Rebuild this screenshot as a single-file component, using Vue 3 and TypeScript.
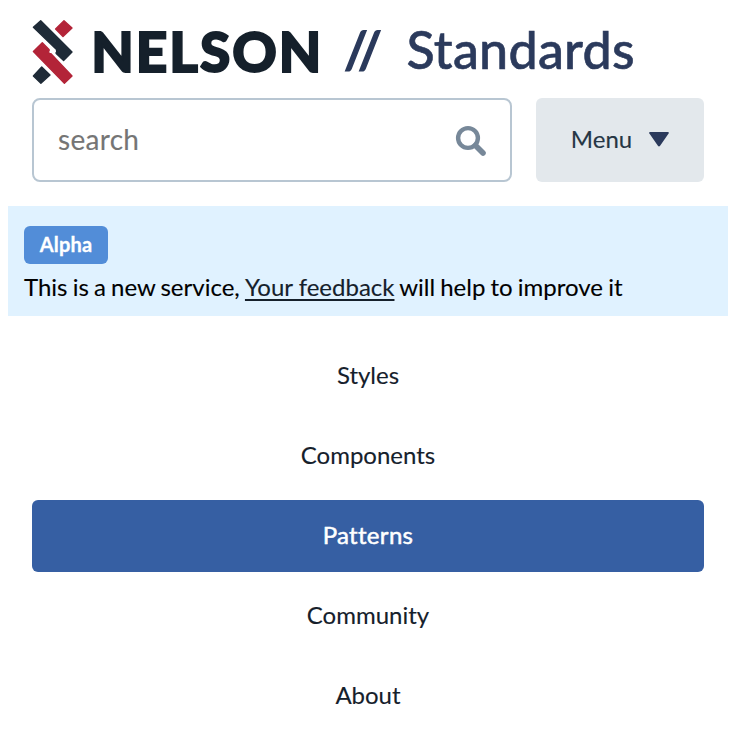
<script setup lang="ts">
import { ref } from 'vue'

const query = ref<string>('')
const active = ref<string>('Patterns')
const sections: string[] = ['Styles', 'Components', 'Patterns', 'Community', 'About']
</script>

<template>
  <div class="page">
    <header class="header">
      <a class="brand" aria-label="NELSON // Standards">
        <svg width="640" height="74" viewBox="0 0 640 74">
          <g stroke-width="1.4" stroke-linejoin="round">
            <path class="dark" d="M8.7 4.8 L40 36 L31.6 44.4 L24.2 37.4 Q23.7 36.6 24.7 36 L24.5 33.4 L1.4 11.3 Z" />
            <path class="red" d="M32 4.8 L40 12 L31 20.5 L23.6 12.9 Z" />
            <path class="red" d="M10.3 26.7 L17 33.5 Q17.6 34.2 16.6 35 L17 37.4 L19 37.8 L40 59.9 L32.4 67.2 L1.4 35.5 Z" />
            <path class="dark" d="M9.7 51.1 L18 58.9 L8.9 67.2 L1.4 60 Z" />
          </g>
          <text class="name" x="59.3" y="55.6" textLength="230">NELSON</text>
          <text class="product slashes" x="312.5" y="52">//</text>
          <text class="product" x="374.5" y="53" textLength="228">Standards</text>
        </svg>
      </a>
      <div class="tools">
        <label class="search">
          <input v-model="query" type="text" placeholder="search" />
          <svg width="32" height="32" viewBox="0 0 32 32">
            <circle cx="13" cy="13" r="9.9" />
            <path d="M20.5 20.5 L28 28" />
          </svg>
        </label>
        <button class="menu" type="button">
          <span>Menu</span>
          <svg width="20" height="15" viewBox="0 0 20 15">
            <path d="M0 1.2 Q0 0 1.2 0 H18.8 Q20.4 0 19.6 1.6 L11.1 13.8 Q10 15.4 8.9 13.8 L.4 1.6 Z" />
          </svg>
        </button>
      </div>
    </header>
    <section class="banner">
      <strong class="tag">Alpha</strong>
      <p>This is a new service, <a>Your feedback</a> will help to improve it</p>
    </section>
    <nav class="nav">
      <a
        v-for="section in sections"
        :key="section"
        :class="{ active: section === active }"
        @click="active = section"
      >{{ section }}</a>
    </nav>
  </div>
</template>

<style>
body {
  background: #fff;
}
</style>

<style scoped>
.page {
  box-sizing: border-box;
  width: 736px;
  height: 730px;
  padding: 16px 8px 0;
  overflow: hidden;
  font-family: Lato, sans-serif;
  font-size: 24px;
  color: #000;
  -webkit-text-stroke-width: 0.12px;
}
.header {
  padding: 0 24px 24px;
}
.brand {
  display: block;
  height: 82px;
}
.brand svg {
  display: block;
}
.dark {
  fill: #1f2b37;
  stroke: #1f2b37;
}
.red {
  fill: #b32438;
  stroke: #b32438;
}
.name {
  font-size: 55px;
  font-weight: 900;
  fill: #15202b;
  stroke: #15202b;
  stroke-width: 1.9px;
}
.product {
  font-size: 52px;
  font-weight: 500;
  fill: #2b3a5c;
  stroke: #2b3a5c;
  stroke-width: 0.6px;
}
.slashes {
  font-size: 50px;
  letter-spacing: 2.6px;
  stroke-width: 2px;
}
.tools {
  display: flex;
  gap: 24px;
}
.search {
  box-sizing: border-box;
  display: flex;
  align-items: center;
  width: 480px;
  height: 84px;
  padding: 0 23px 0 24px;
  border: 2px solid #b8c6d2;
  border-radius: 8px;
}
.search input {
  flex: 1;
  min-width: 0;
  padding: 0 0 2px;
  border: 0;
  outline: 0;
  background: none;
  font: 400 28px/40px Lato, sans-serif;
  letter-spacing: 0.3px;
}
.search input::placeholder {
  color: #757575;
  opacity: 1;
}
.search svg {
  margin-top: 2px;
  fill: none;
  stroke: #778899;
  stroke-width: 4.4;
}
.search path {
  stroke-width: 5.6;
  stroke-linecap: round;
}
.menu {
  display: flex;
  align-items: center;
  justify-content: center;
  gap: 17px;
  width: 168px;
  height: 84px;
  padding: 0 0 2px;
  border: 0;
  border-radius: 6px;
  background: #e3e8ec;
  color: #263645;
  font: 400 24px/32px Lato, sans-serif;
}
.menu svg {
  fill: #2b3a5c;
}
.banner {
  box-sizing: border-box;
  height: 110px;
  padding: 20px 16px 0;
  background: #e0f2ff;
}
.tag {
  display: block;
  width: 84px;
  height: 38px;
  border-radius: 6px;
  background: #528dd8;
  color: #fff;
  font-size: 20px;
  line-height: 37px;
  letter-spacing: 0.15px;
  text-align: center;
  -webkit-text-stroke-width: 0.3px;
}
.banner p {
  margin: 7px 0 0;
  line-height: 32px;
  white-space: nowrap;
  word-spacing: -1px;
}
.banner a {
  color: #15202b;
  text-decoration: underline;
  text-decoration-thickness: 2px;
  text-underline-offset: 3px;
  text-decoration-skip-ink: none;
  word-spacing: 0;
}
.nav {
  display: flex;
  flex-direction: column;
  gap: 8px;
  padding: 24px 24px 0;
}
.nav a {
  height: 72px;
  border-radius: 6px;
  color: #15202b;
  line-height: 70px;
  text-align: center;
}
.nav .active {
  background: #365fa3;
  color: #fff;
  letter-spacing: 0.3px;
  -webkit-text-stroke-width: 0.5px;
}
</style>
